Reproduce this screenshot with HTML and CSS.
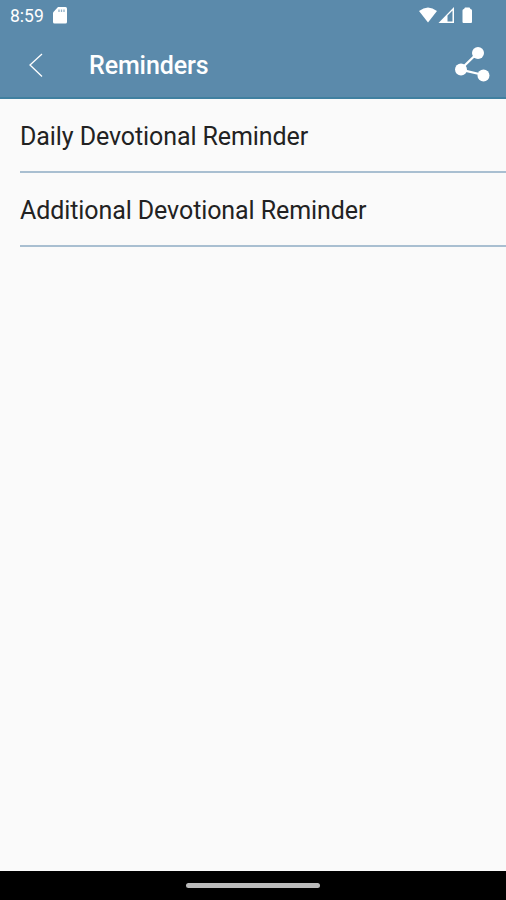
FILE: index.html
```html
<!DOCTYPE html>
<html lang="en">
<head>
    <meta charset="UTF-8">
    <meta name="viewport" content="width=device-width, initial-scale=1.0">
    <title>Reminders</title>
    <link rel="stylesheet" href="styles.css">
</head>
<body>
    <header>
        <div class="status-bar">
            <span class="time">8:59</span>
            <svg class="sd-card" width="14" height="17" viewBox="0 0 14 17">
                <path d="M5 0h7.500Q14 0 14 1.500v13.500q0 1.500-1.500 1.500h-11Q0 16.500 0 15V5.500z" fill="#fff"/>
                <path d="M6 2.500v2.500M8.500 2.500v2.500M11 2.500v2.500" stroke="#8fb0c6" stroke-width="1.300"/>
            </svg>
            <svg class="signals" width="54" height="17" viewBox="0 0 54 17">
                <path d="M0 4Q9-3 18 4L9 15.500z" fill="#fff"/>
                <path d="M35 0V16H19.500zM33.500 3.500L28.500 8.500V14.500H33.500z" fill="#fff" fill-rule="evenodd"/>
                <path d="M43.500 3.500q0-1.500 1.500-1.500L46 .500h4.500L51.500 2q1.500 0 1.500 1.500V15q0 1-1 1h-7.500q-1 0-1-1z" fill="#fff"/>
            </svg>
        </div>
        <div class="app-bar">
            <svg class="back" width="14" height="24" viewBox="0 0 14 24">
                <path d="M13 1L1 12 13 23.500" fill="none" stroke="#fff" stroke-width="1.300"/>
            </svg>
            <h1>Reminders</h1>
            <svg class="share" width="36" height="36" viewBox="0 0 36 36">
                <path d="M23.500 6L6.500 22.500l23 5.500" fill="none" stroke="#fff" stroke-width="2.300"/>
                <circle cx="24" cy="6" r="6" fill="#fff"/>
                <circle cx="7" cy="22.500" r="6" fill="#fff"/>
                <circle cx="29.500" cy="28.500" r="6" fill="#fff"/>
            </svg>
        </div>
    </header>
    <main>
        <ul class="reminders">
            <li><span>Daily Devotional Reminder</span></li>
            <li><span>Additional Devotional Reminder</span></li>
        </ul>
    </main>
    <footer class="nav-bar">
        <div class="handle"></div>
    </footer>
</body>
</html>
```
FILE: styles.css
```css
* {
    margin: 0;
    padding: 0;
    box-sizing: border-box;
}

body {
    font-family: Roboto, sans-serif;
    background-color: #fafafa;
    height: 100vh;
    display: flex;
    flex-direction: column;
    color: #222;
}

header {
    height: 99px;
    background-color: #5b8aab;
    border-bottom: 2px solid #4080a0;
    color: #fff;
}

.status-bar {
    height: 31px;
    display: flex;
    align-items: center;
    padding: 0 33px 0 10px;
}

.time {
    font-size: 17.5px;
}

.sd-card {
    margin-left: 9px;
}

.signals {
    margin-left: auto;
}

.app-bar {
    height: 67px;
    display: flex;
    align-items: center;
    padding: 0 16px 0 29px;
}

h1 {
    margin-left: 46px;
    padding-top: 2px;
    font-size: 25px;
    font-weight: 500;
    letter-spacing: -0.1px;
}

.share {
    margin-left: auto;
}

main {
    flex: 1;
}

.reminders {
    list-style: none;
    padding-left: 20px;
}

.reminders li {
    height: 74px;
    padding-top: 2px;
    display: flex;
    align-items: center;
    border-bottom: 2px solid #a9bfd1;
    font-size: 25px;
    letter-spacing: -0.09px;
}

.nav-bar {
    height: 29px;
    background-color: #000;
    display: flex;
    align-items: center;
    justify-content: center;
}

.handle {
    width: 134px;
    height: 5px;
    border-radius: 3px;
    background-color: #bababa;
}
```
